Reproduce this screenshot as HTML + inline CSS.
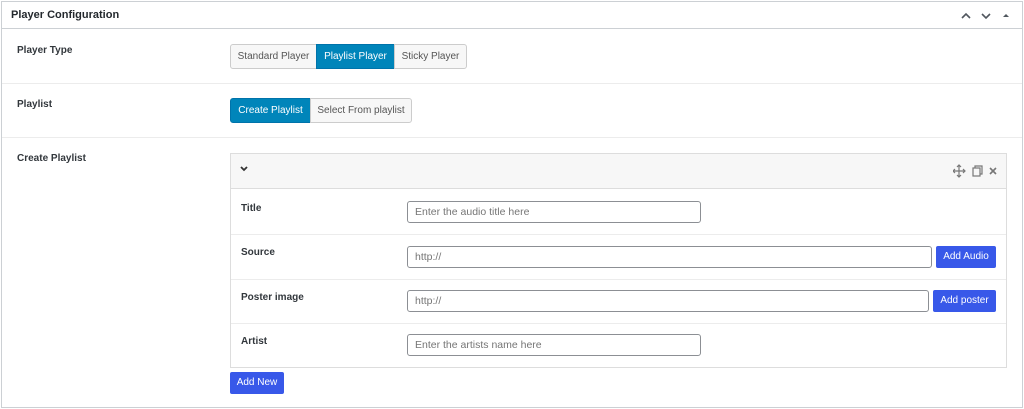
<!DOCTYPE html>
<html><head><style>
*{box-sizing:border-box;margin:0;padding:0}
body{width:1024px;height:409px;background:#fff;font-family:"Liberation Sans",sans-serif;font-size:10px;color:#23282d;position:relative;overflow:hidden}
.a{position:absolute}
.box{left:1px;top:1px;width:1022px;height:407px;border:1px solid #ccd0d4;background:#fff}
.hl{height:1px;background:#ececec}
.lbl{font-weight:bold;font-size:10px;color:#32373c}
.btn{position:absolute;height:25px;line-height:24px;text-align:center;font-size:10px;border:1px solid #ccc;background:#f7f7f7;color:#555}
.on{background:#0085ba;border-color:#0073aa;color:#fff}
.inp{position:absolute;height:22px;border:1px solid #8c8f94;border-radius:3px;padding-left:7px;line-height:21px;color:#757575;font-size:10.5px;background:#fff}
.blue{position:absolute;background:#3858e9;color:#fff;border-radius:2px;text-align:center;font-size:10px}
</style></head><body>
<div class="a box"></div>
<div class="a" style="left:11px;top:9px;font-size:11px;font-weight:bold;color:#23282d">Player Configuration</div>
<svg class="a" style="left:958px;top:10px" width="60" height="12" viewBox="0 0 60 12"><path d="M4 8 L8 4 L12 8" stroke="#50575e" stroke-width="1.6" fill="none"/><path d="M24 4 L28 8 L32 4" stroke="#50575e" stroke-width="1.6" fill="none"/><path d="M45 7 L48 4 L51 7Z" fill="#50575e"/></svg>
<div class="a hl" style="left:2px;top:28px;width:1020px;background:#ccd0d4"></div>
<div class="a lbl" style="left:17px;top:45px">Player Type</div>
<div class="btn" style="left:230px;top:44px;width:87px;border-radius:3px 0 0 3px">Standard Player</div>
<div class="btn on" style="left:316px;top:44px;width:79px">Playlist Player</div>
<div class="btn" style="left:394px;top:44px;width:73px;border-radius:0 3px 3px 0">Sticky Player</div>
<div class="a hl" style="left:2px;top:83px;width:1020px"></div>
<div class="a lbl" style="left:17px;top:99px">Playlist</div>
<div class="btn on" style="left:230px;top:98px;width:81px;border-radius:3px 0 0 3px">Create Playlist</div>
<div class="btn" style="left:310px;top:98px;width:102px;border-radius:0 3px 3px 0">Select From playlist</div>
<div class="a hl" style="left:2px;top:137px;width:1020px"></div>
<div class="a lbl" style="left:17px;top:153px">Create Playlist</div>
<div class="a" style="left:230px;top:153px;width:777px;height:215px;border:1px solid #ddd"></div>
<div class="a" style="left:231px;top:154px;width:775px;height:35px;background:#f7f7f7;border-bottom:1px solid #ddd"></div>
<svg class="a" style="left:239px;top:165px" width="10" height="8"><path d="M2 2 L5 5 L8 2" stroke="#333" stroke-width="1.8" fill="none"/></svg>
<svg class="a" style="left:953px;top:164px" width="46" height="14" viewBox="0 0 46 14"><path d="M6 1v12M0 7h12M4 3l2-2 2 2M4 11l2 2 2-2M2 5L0 7l2 2M10 5l2 2-2 2" stroke="#777" stroke-width="1.2" fill="none"/><rect x="20" y="4" width="7" height="8" stroke="#777" stroke-width="1.2" fill="none"/><path d="M22 4V2h7v8h-2" stroke="#777" stroke-width="1.2" fill="none"/><path d="M37 4l6 6M43 4l-6 6" stroke="#777" stroke-width="1.6"/></svg>
<div class="a lbl" style="left:241px;top:203px">Title</div>
<div class="inp" style="left:407px;top:201px;width:294px">Enter the audio title here</div>
<div class="a hl" style="left:231px;top:234px;width:775px"></div>
<div class="a lbl" style="left:241px;top:247px">Source</div>
<div class="inp" style="left:407px;top:246px;width:525px">http://</div>
<div class="blue" style="left:936px;top:246px;width:60px;height:22px;line-height:22px">Add Audio</div>
<div class="a hl" style="left:231px;top:279px;width:775px"></div>
<div class="a lbl" style="left:241px;top:292px">Poster image</div>
<div class="inp" style="left:407px;top:290px;width:522px">http://</div>
<div class="blue" style="left:933px;top:290px;width:63px;height:22px;line-height:22px">Add poster</div>
<div class="a hl" style="left:231px;top:323px;width:775px"></div>
<div class="a lbl" style="left:241px;top:336px">Artist</div>
<div class="inp" style="left:407px;top:334px;width:294px">Enter the artists name here</div>
<div class="blue" style="left:230px;top:372px;width:54px;height:22px;line-height:22px">Add New</div>
</body></html>
